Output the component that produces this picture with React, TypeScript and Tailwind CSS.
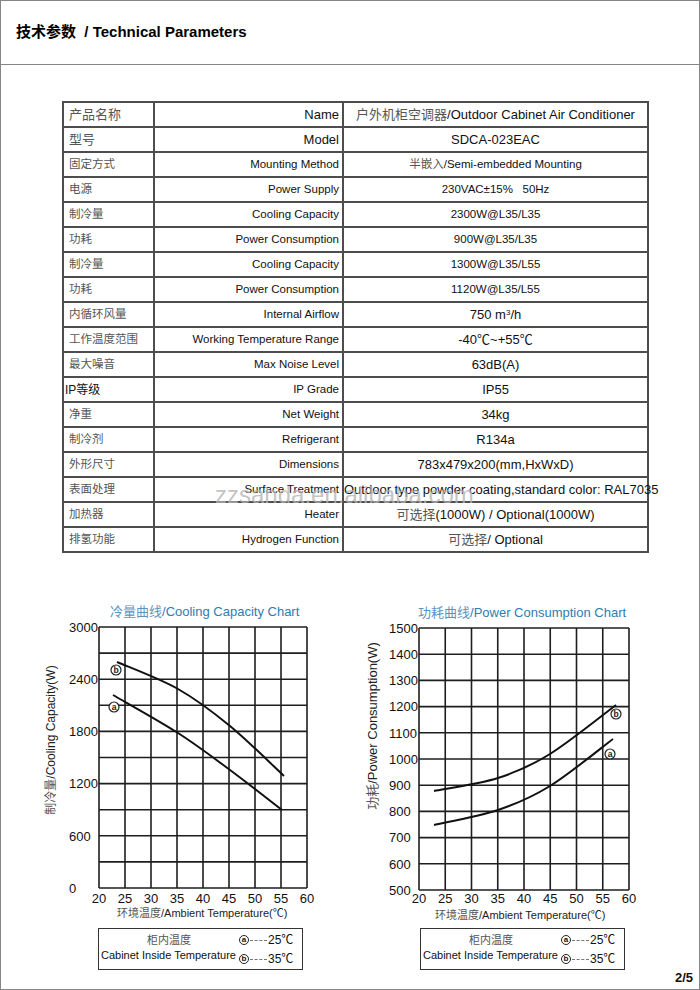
import React from "react";

type Pt = [number, number];

// catmull-rom -> cubic bezier
function smooth(p: Pt[]) {
  let d = `M${p[0][0]} ${p[0][1]}`;
  for (let i = 0; i < p.length - 1; i++) {
    const p0 = p[i - 1] || p[i];
    const p1 = p[i];
    const p2 = p[i + 1];
    const p3 = p[i + 2] || p2;
    const c1x = p1[0] + (p2[0] - p0[0]) / 6;
    const c1y = p1[1] + (p2[1] - p0[1]) / 6;
    const c2x = p2[0] - (p3[0] - p1[0]) / 6;
    const c2y = p2[1] - (p3[1] - p1[1]) / 6;
    d += ` C${c1x} ${c1y} ${c2x} ${c2y} ${p2[0]} ${p2[1]}`;
  }
  return d;
}

const SVG_FONT = "'Liberation Sans','Noto Sans CJK SC',sans-serif";

type ChartProps = {
  vx: number;
  vw: number;
  left: number;
  right: number;
  top: number;
  bottom: number;
  yLabels: string[];
  yStep: number;
  yLabelX: number;
  titleZh: string;
  titleEn: string;
  titleX: number;
  titleY: number;
  xTitleX: number;
  xTitleY: number;
  xTitleSize: number;
  xLabelY: number;
  yTitleZh: string;
  yTitleEn: string;
  yTitleX: number;
  yTitleY: number;
  yTitleSize: number;
  curves: Pt[][];
  marks: { x: number; y: number; l: string }[];
};

function Chart(c: ChartProps) {
  const dx = (c.right - c.left) / 8;
  const dy = (c.bottom - c.top) / 10;
  const xs = ["20", "25", "30", "35", "40", "45", "50", "55", "60"];
  return (
    <svg width={c.vw} height={330} viewBox={`${c.vx} 595 ${c.vw} 330`} className="block shrink-0" fontFamily={SVG_FONT}>
      <text x={c.titleX} y={c.titleY} fontSize={13} fill="#2c7db3">
        <tspan fill="#5b93bd">{c.titleZh}</tspan>
        {c.titleEn}
      </text>

      {/* grid */}
      {Array.from({ length: 9 }).map((_, i) => (
        <line key={"v" + i} x1={c.left + i * dx} x2={c.left + i * dx} y1={c.top} y2={c.bottom} stroke="#1e1e1e" strokeWidth={1.6} />
      ))}
      {Array.from({ length: 11 }).map((_, j) => (
        <line key={"h" + j} x1={c.left} x2={c.right} y1={c.top + j * dy} y2={c.top + j * dy} stroke="#1e1e1e" strokeWidth={1.6} />
      ))}

      {c.yLabels.map((v, k) => (
        <text key={v} x={c.yLabelX} y={c.top + k * c.yStep * dy + 4.8} fontSize={13} fill="#111">
          {v}
        </text>
      ))}
      {xs.map((v, i) => (
        <text key={v} x={c.left + i * dx} y={c.xLabelY} fontSize={13} fill="#111" textAnchor="middle">
          {v}
        </text>
      ))}

      <text x={c.xTitleX} y={c.xTitleY} fontSize={c.xTitleSize} fill="#222">
        <tspan fill="#555">环境温度</tspan>/Ambient Temperature(℃)
      </text>

      <text
        x={c.yTitleX}
        y={c.yTitleY}
        fontSize={c.yTitleSize}
        fill="#222"
        textAnchor="middle"
        dominantBaseline="central"
        transform={`rotate(-90 ${c.yTitleX} ${c.yTitleY})`}
      >
        <tspan fill="#555">{c.yTitleZh}</tspan>
        {c.yTitleEn}
      </text>

      {c.curves.map((p, i) => (
        <path key={i} d={smooth(p)} fill="none" stroke="#111" strokeWidth={2} />
      ))}

      {c.marks.map((m) => (
        <g key={m.l}>
          <circle cx={m.x} cy={m.y} r={5} fill="#fff" stroke="#222" strokeWidth={1.2} />
          <text x={m.x} y={m.y + 3} fontSize={8.5} fontWeight={700} textAnchor="middle" fill="#222">
            {m.l}
          </text>
        </g>
      ))}
    </svg>
  );
}

function Mark({ l }: { l: string }) {
  return (
    <span className="w-[10px] h-[10px] rounded-full border border-[#222] text-[8px] leading-none font-bold flex items-center justify-center">
      {l}
    </span>
  );
}

function Legend() {
  return (
    <div className="w-[205px] h-[42px] border border-[#333] flex items-start pt-[5px] text-[11px] leading-[12px] text-[#111]">
      <div className="w-[140px] flex flex-col">
        <span className="text-center text-[#555]">柜内温度</span>
        <span className="pl-[2px] mt-[3px] whitespace-nowrap">Cabinet Inside Temperature</span>
      </div>
      <div className="flex flex-col gap-[7px]">
        <span className="flex items-center">
          <Mark l="a" />
          <span className="w-[17px] mx-[1px] border-t border-dashed border-[#777]" />
          <span className="text-[12px]">25℃</span>
        </span>
        <span className="flex items-center">
          <Mark l="b" />
          <span className="w-[17px] mx-[1px] border-t border-dashed border-[#777]" />
          <span className="text-[12px]">35℃</span>
        </span>
      </div>
    </div>
  );
}

type Row = { zh: string; en: string; val: React.ReactNode; big?: boolean; vbig?: boolean; ip?: boolean };

const rows: Row[] = [
  {
    zh: "产品名称",
    en: "Name",
    val: (
      <>
        <span className="text-[#555]">户外机柜空调器</span>/Outdoor Cabinet Air Conditioner
      </>
    ),
    big: true,
    vbig: true,
  },
  { zh: "型号", en: "Model", val: "SDCA-023EAC", big: true, vbig: true },
  {
    zh: "固定方式",
    en: "Mounting Method",
    val: (
      <>
        <span className="text-[#555]">半嵌入</span>/Semi-embedded Mounting
      </>
    ),
  },
  { zh: "电源", en: "Power Supply", val: "230VAC±15%   50Hz" },
  { zh: "制冷量", en: "Cooling Capacity", val: "2300W@L35/L35" },
  { zh: "功耗", en: "Power Consumption", val: "900W@L35/L35" },
  { zh: "制冷量", en: "Cooling Capacity", val: "1300W@L35/L55" },
  { zh: "功耗", en: "Power Consumption", val: "1120W@L35/L55" },
  {
    zh: "内循环风量",
    en: "Internal Airflow",
    val: (
      <>
        750 m<sup className="text-[8px]">3</sup>/h
      </>
    ),
    vbig: true,
  },
  { zh: "工作温度范围", en: "Working Temperature Range", val: "-40℃~+55℃", vbig: true },
  { zh: "最大噪音", en: "Max Noise Level", val: "63dB(A)", vbig: true },
  { zh: "IP等级", en: "IP Grade", val: "IP55", vbig: true, ip: true },
  { zh: "净重", en: "Net Weight", val: "34kg", vbig: true },
  { zh: "制冷剂", en: "Refrigerant", val: "R134a", vbig: true },
  { zh: "外形尺寸", en: "Dimensions", val: "783x479x200(mm,HxWxD)", vbig: true },
  { zh: "表面处理", en: "Surface Treatment", val: "Outdoor type powder coating,standard color: RAL7035", vbig: true },
  {
    zh: "加热器",
    en: "Heater",
    val: (
      <>
        <span className="text-[#555]">可选择</span>(1000W) / Optional(1000W)
      </>
    ),
    vbig: true,
  },
  {
    zh: "排氢功能",
    en: "Hydrogen Function",
    val: (
      <>
        <span className="text-[#555]">可选择</span>/ Optional
      </>
    ),
    vbig: true,
  },
];

export default function App() {
  return (
    <div className="relative w-[700px] h-[990px] border border-[#858585] bg-white flex flex-col font-['Liberation_Sans','Noto_Sans_CJK_SC',sans-serif] text-[#111]">
      {/* Header */}
      <div className="h-[64px] shrink-0 border-b border-[#858585] flex items-center pl-[15px]">
        <h1 className="text-[15px] font-bold whitespace-pre text-black">技术参数  / Technical Parameters</h1>
      </div>

      {/* Table */}
      <div className="h-[530px] shrink-0 pt-[36px] pl-[61px]">
        <table className="border-collapse table-fixed w-[585px]">
          <colgroup>
            <col className="w-[91px]" />
            <col className="w-[189px]" />
            <col className="w-[305px]" />
          </colgroup>
          <tbody>
            {rows.map((r, i) => (
              <tr key={i} className="h-[25px]">
                <td
                  className={
                    "border-2 border-[#4d4d4d] p-0 align-middle leading-none whitespace-nowrap " +
                    (r.ip ? "pl-[1px] text-[12px] text-[#111]" : r.big ? "pl-[5px] text-[13px] text-[#555]" : "pl-[5px] text-[11.5px] text-[#555]")
                  }
                >
                  {r.zh}
                </td>
                <td
                  className={
                    "border-2 border-[#4d4d4d] p-0 pr-[3px] text-right align-middle leading-none whitespace-nowrap " +
                    (r.big ? "text-[13px]" : "text-[11.5px]")
                  }
                >
                  {r.en}
                </td>
                <td
                  className={
                    "border-2 border-[#4d4d4d] p-0 text-center align-middle leading-none whitespace-pre " +
                    (r.vbig ? "text-[13px]" : "text-[11.5px]")
                  }
                >
                  {r.val}
                </td>
              </tr>
            ))}
          </tbody>
        </table>
      </div>

      {/* Charts */}
      <div className="flex shrink-0">
        <Chart
          vx={1}
          vw={349}
          left={99}
          right={307}
          top={627}
          bottom={888}
          yLabels={["3000", "2400", "1800", "1200", "600", "0"]}
          yStep={2}
          yLabelX={69}
          titleZh="冷量曲线"
          titleEn="/Cooling Capacity Chart"
          titleX={110}
          titleY={616}
          xTitleX={117}
          xTitleY={917}
          xTitleSize={11}
          xLabelY={903}
          yTitleZh="制冷量"
          yTitleEn="/Cooling  Capacity(W)"
          yTitleX={51}
          yTitleY={740}
          yTitleSize={12}
          curves={[
            [
              [117, 662],
              [178, 689],
              [230, 726],
              [284, 776],
            ],
            [
              [113, 695],
              [178, 733],
              [230, 770],
              [282, 810],
            ],
          ]}
          marks={[
            { x: 116, y: 670, l: "b" },
            { x: 114, y: 707, l: "a" },
          ]}
        />
        <Chart
          vx={350}
          vw={348}
          left={419}
          right={629}
          top={628}
          bottom={890}
          yLabels={["1500", "1400", "1300", "1200", "1100", "1000", "900", "800", "700", "600", "500"]}
          yStep={1}
          yLabelX={389}
          titleZh="功耗曲线"
          titleEn="/Power Consumption Chart"
          titleX={418}
          titleY={617}
          xTitleX={435}
          xTitleY={919}
          xTitleSize={11}
          xLabelY={903}
          yTitleZh="功耗"
          yTitleEn="/Power Consumption(W)"
          yTitleX={372}
          yTitleY={726}
          yTitleSize={13}
          curves={[
            [
              [434, 791],
              [498, 778],
              [550, 754],
              [616, 705],
            ],
            [
              [434, 825],
              [498, 810],
              [550, 786],
              [613, 739],
            ],
          ]}
          marks={[
            { x: 616, y: 714, l: "b" },
            { x: 610, y: 754, l: "a" },
          ]}
        />
      </div>

      {/* Legends */}
      <div className="flex shrink-0 mt-[3px]">
        <div className="w-[349px] pl-[97px]">
          <Legend />
        </div>
        <div className="w-[348px] pl-[70px]">
          <Legend />
        </div>
      </div>

      <div className="shrink-0 mt-[1px] pr-[6px] text-right text-[13px] leading-[14px] font-bold">2/5</div>

      {/* watermark */}
      <div className="absolute left-[214px] top-[482px] text-[24px] leading-none text-[#b4b4b4]/80 whitespace-nowrap pointer-events-none">
        zzsanda.en.alibaba.com
      </div>
    </div>
  );
}
